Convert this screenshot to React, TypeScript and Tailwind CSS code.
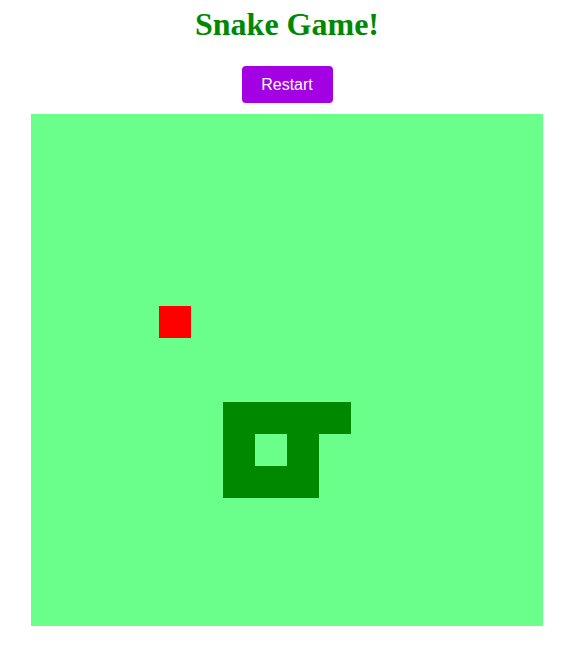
import React from "react";

const GRID = 16;
const snake: [number, number][] = [
  [9, 9], [8, 9], [7, 9], [6, 9], [6, 10], [6, 11], [7, 11], [8, 11], [8, 10],
];
const food: [number, number] = [4, 6];

export default function App() {
  const cells = [];
  for (let r = 0; r < GRID; r++) {
    for (let c = 0; c < GRID; c++) {
      const isSnake = snake.some(([x, y]) => x === c && y === r);
      const isFood = food[0] === c && food[1] === r;
      cells.push(
        <div
          key={`${r}-${c}`}
          className={isSnake ? "bg-[#008800]" : isFood ? "bg-[#ff0000]" : ""}
        />
      );
    }
  }
  return (
    <div className="flex flex-col items-center bg-white w-[574px] h-[649px]">
      <h1
        className="mt-[6px] text-[32px] leading-[37px] font-bold text-[#008800]"
        style={{ fontFamily: '"Liberation Serif", "Times New Roman", serif' }}
      >
        Snake Game!
      </h1>
      <button
        className="mt-[23px] w-[91px] h-[37px] rounded-[4px] bg-[#a300e3] text-white text-[16px]"
        style={{ fontFamily: '"Liberation Sans", Arial, sans-serif' }}
      >
        Restart
      </button>
      <div className="mt-[11px] w-[512px] h-[512px] bg-[#6aff8a] grid grid-cols-[repeat(16,32px)] grid-rows-[repeat(16,32px)]">
        {cells}
      </div>
    </div>
  );
}
